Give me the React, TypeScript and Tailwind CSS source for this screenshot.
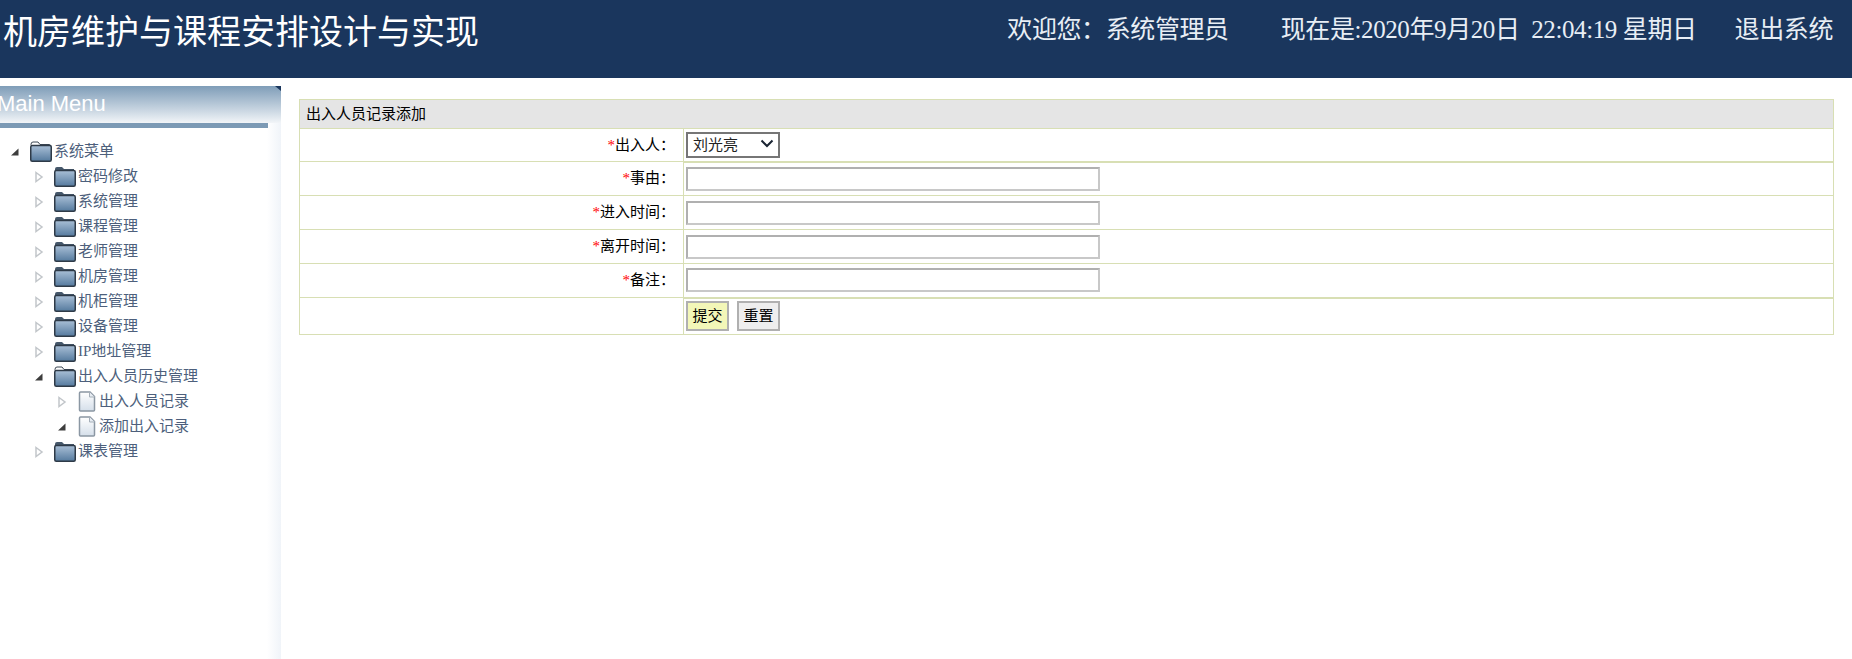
const font = "font-['Liberation_Serif','Noto_Sans_CJK_SC',serif]";

function Folder({ open }: { open?: boolean }) {
	return (
		<svg width="22" height="21" viewBox="0 0 22 21" className="shrink-0">
			<defs>
				<linearGradient id="fg" x1="0" y1="0" x2="0" y2="1">
					<stop offset="0" stopColor="#a9bfd6" />
					<stop offset="1" stopColor="#557a9e" />
				</linearGradient>
			</defs>
			{open ? (
				<path d="M1 3.5 Q1 1 3 1 L8 1 L10 3.5 L19 3.5 Q21 3.5 21 6 L21 8 L3 8 Z" fill="#fff" stroke="#3b4652" strokeWidth="1" />
			) : (
				<path d="M1 3 Q1 1 3 1 L8 1 L10 3 L20 3 L20 7 L1 7 Z" fill="#46586b" />
			)}
			<rect x="0.75" y="4.5" width="20.5" height="15.75" rx="1.5" fill="url(#fg)" stroke="#2e3a47" strokeWidth="1.5" />
		</svg>
	);
}

function FileIcon() {
	return (
		<svg width="18" height="21" viewBox="0 0 18 21" className="shrink-0">
			<defs>
				<linearGradient id="pg" x1="0" y1="0" x2="0" y2="1">
					<stop offset="0" stopColor="#ffffff" />
					<stop offset="1" stopColor="#d5dfea" />
				</linearGradient>
			</defs>
			<path d="M1.5 2 Q1.5 1 2.5 1 L12 1 L16.5 5.5 L16.5 19 Q16.5 20 15.5 20 L2.5 20 Q1.5 20 1.5 19 Z" fill="url(#pg)" stroke="#8b97a3" strokeWidth="1.5" />
			<path d="M11.5 1 L11.5 6 L16.5 6" fill="#e8edf3" stroke="#a5afb9" strokeWidth="1" />
		</svg>
	);
}

function Arrow({ open }: { open?: boolean }) {
	return (
		<svg width="10" height="12" viewBox="0 0 10 12" className="shrink-0">
			{open ? (
				<path d="M1 9.5 L8.5 9.5 L8.5 2.5 Z" fill="#3d3d3d" />
			) : (
				<path d="M2 1.5 L8 6 L2 10.5 Z" fill="#fff" stroke="#c2c6ca" strokeWidth="1.5" />
			)}
		</svg>
	);
}

type Node = { label: string; depth: number; open?: boolean; file?: boolean };

const tree: Node[] = [
	{ label: "系统菜单", depth: 0, open: true },
	{ label: "密码修改", depth: 1 },
	{ label: "系统管理", depth: 1 },
	{ label: "课程管理", depth: 1 },
	{ label: "老师管理", depth: 1 },
	{ label: "机房管理", depth: 1 },
	{ label: "机柜管理", depth: 1 },
	{ label: "设备管理", depth: 1 },
	{ label: "IP地址管理", depth: 1 },
	{ label: "出入人员历史管理", depth: 1, open: true },
	{ label: "出入人员记录", depth: 2, file: true },
	{ label: "添加出入记录", depth: 2, file: true, open: true },
	{ label: "课表管理", depth: 1 },
];

function TreeRow({ node }: { node: Node }) {
	const pad = node.depth === 0 ? "pl-[10px]" : node.depth === 1 ? "pl-[34px]" : "pl-[57px]";
	return (
		<div className={`flex h-[25px] items-center ${pad}`}>
			<Arrow open={node.open} />
			<div className={node.file ? "ml-[11px] mr-[3px] flex" : "ml-[10px] mr-[2px] flex"}>
				{node.file ? <FileIcon /> : <Folder open={node.open} />}
			</div>
			<span className="text-[15px] leading-none text-[#4d5f7c]">{node.label}</span>
		</div>
	);
}

function Label({ text }: { text: string }) {
	return (
		<td className="border border-[#d8dfb4] pr-[8px] text-right text-[15px] text-black">
			<span className="text-[#ff0000]">*</span>
			{text}：
		</td>
	);
}

function TextRow({ text, h, thick }: { text: string; h: string; thick?: boolean }) {
	return (
		<tr className={h}>
			<Label text={text} />
			<td className={`border border-[#d8dfb4] pl-[2px] ${thick ? "border-b-2" : ""}`}>
				<input className="block h-[24px] w-[414px] border-2 border-[#b0b0b0] border-r-[#c8c8c8] border-b-[#c8c8c8] bg-white" />
			</td>
		</tr>
	);
}

export default function App() {
	return (
		<div className={`flex h-[659px] w-[1852px] flex-col overflow-hidden bg-white ${font}`}>
			<div className="flex h-[78px] shrink-0 justify-between bg-[#1a365d] text-white">
				<div className="pl-[3px] pt-[11px] text-[34px] leading-[44px]">机房维护与课程安排设计与实现</div>
				<div className="flex pr-[19px] pt-[13px] text-[25px] leading-[33px] tracking-[-0.4px] text-[#e8eef5]">
					<span>欢迎您：系统管理员</span>
					<span className="ml-[52px]">现在是:2020年9月20日&nbsp;&nbsp;22:04:19 星期日</span>
					<span className="ml-[38px]">退出系统</span>
				</div>
			</div>
			<div className="flex min-h-0 flex-1">
				<div className="mt-[8px] w-[281px] shrink-0 bg-gradient-to-r from-white from-[95%] to-[#f0f4f9]">
					<div className="relative h-[37px] overflow-hidden bg-gradient-to-b from-[#7f9db8] to-[#f2f5f8] pl-0">
						<div className="-ml-[3px] pt-[3px] font-['Liberation_Sans',sans-serif] text-[22px] leading-[30px] text-white">Main Menu</div>
						<div className="absolute right-0 top-0 h-0 w-0 border-l-[6px] border-t-[5px] border-l-transparent border-t-[#1a365d]" />
					</div>
					<div className="h-[5px] w-[268px] bg-[#7c9ab5]" />
					<div className="pt-[11px]">
						{tree.map((n) => (
							<TreeRow key={n.label} node={n} />
						))}
					</div>
				</div>
				<div className="min-w-0 flex-1 pl-[18px] pr-[18px] pt-[21px]">
					<table className="w-full table-fixed border-collapse">
						<colgroup>
							<col className="w-[384px]" />
							<col />
						</colgroup>
						<tbody>
							<tr className="h-[29px] bg-[#e5e5e5]">
								<td colSpan={2} className="border border-[#d8dfb4] pl-[6px] text-[15px] text-black">
									出入人员记录添加
								</td>
							</tr>
							<tr className="h-[33px]">
								<Label text="出入人" />
								<td className="border border-[#d8dfb4] border-b-2 pl-[2px]">
									<div className="relative h-[26px] w-[94px] border-2 border-[#767676] bg-white pl-[5px] text-[15px] leading-[22px] text-[#222]">
										刘光亮
										<svg width="14" height="9" viewBox="0 0 14 9" className="absolute right-[4px] top-[5px]">
											<path d="M1.5 1.5 L7 7 L12.5 1.5" fill="none" stroke="#1a2433" strokeWidth="2" />
										</svg>
									</div>
								</td>
							</tr>
							<TextRow text="事由" h="h-[34px]" />
							<TextRow text="进入时间" h="h-[34px]" />
							<TextRow text="离开时间" h="h-[34px]" />
							<TextRow text="备注" h="h-[34px]" thick />
							<tr className="h-[37px]">
								<td className="border border-[#d8dfb4]" />
								<td className="border border-[#d8dfb4] pl-[2px]">
									<div className="flex gap-[8px]">
										<button className="h-[30px] w-[43px] border-2 border-[#b0b0b0] bg-[#f3f7b8] text-[15px] text-black">提交</button>
										<button className="h-[30px] w-[43px] border-2 border-[#b0b0b0] bg-[#eeeeee] text-[15px] text-black">重置</button>
									</div>
								</td>
							</tr>
						</tbody>
					</table>
				</div>
			</div>
		</div>
	);
}
